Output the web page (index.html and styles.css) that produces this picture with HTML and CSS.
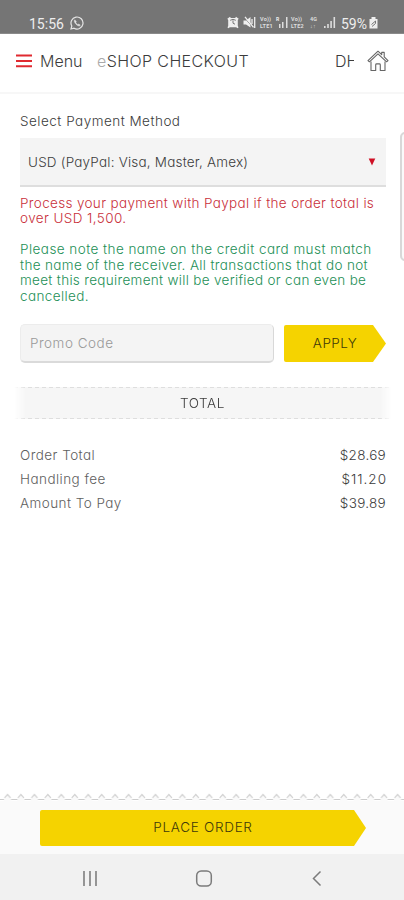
FILE: index.html
```html
<!DOCTYPE html>
<html lang="en">
<head>
<meta charset="utf-8">
<title>eSHOP Checkout</title>
<link rel="stylesheet" href="styles.css">
</head>
<body>
<div class="screen">
  <div class="status">
    <span class="clock">15:56</span>
    <svg class="chat" width="14" height="14" viewBox="0 0 14 14" fill="none" stroke="#e4e4e4" stroke-width="1.2"><path d="M1 13l.8-3A6 6 0 1 1 4 12.2z"/><path d="M4.8 3.8c-1.3 1.2.1 3.4 1.5 4.7 1.4 1.2 3.2 2 4 .7l-1.5-1.1-.9.6C6.900 8.200 6.200 7.400 5.800 6.500l.5-.8z" fill="#e4e4e4" stroke-width=".5"/></svg>
    <svg class="alarm" width="12" height="13" viewBox="0 0 12 13"><path d="M.3 2.800 3 .8l.8 1.100h4.400L9 .8l2.700 2-.9 1.300v5.700l.7 1.700-1.200.7-1-.9H2.700l-1 .9-1.200-.7.700-1.700V4.100z" fill="#eee"/><path d="M3.200 4.300Q6 2.300 8.800 4.300M6 4.300v2.900l2 1" fill="none" stroke="#777"/></svg>
    <svg class="mute" width="13" height="13" viewBox="0 0 13 13"><path d="M.5 4.500H3L7.500 1v10.500L3 8.500H.5z" fill="#eee"/><path d="M1 1l9 10.500" stroke="#757575"/><path d="M2 .8l8.500 10.500M9 3v5M11.700 1v11" stroke="#eee" stroke-width="1.300" fill="none"/></svg>
    <span class="lte lte1"><span>Vo))</span><span>LTE1</span></span>
    <span class="roam">R</span>
    <svg class="bars1" width="9" height="12" viewBox="0 0 9 12" fill="#ddd"><path d="M0 8h1.500v4H0zM3 6h1.500v6H3zM7 1h1.500v11H7z"/></svg>
    <span class="lte lte2"><span>Vo))</span><span>LTE2</span></span>
    <span class="lte four"><span>4G</span><span>↓↑</span></span>
    <svg class="bars2" width="12" height="12" viewBox="0 0 12 12" fill="#ddd"><path d="M0 10h1.600v2H0zM3.200 8h1.600v4H3.200zM6.300 5h1.600v7H6.300zM9.500 1h1.600v11H9.500z"/></svg>
    <span class="percent">59%</span>
    <svg class="battery" width="9" height="13" viewBox="0 0 9 13"><path d="M.5 3h2V1h4v2h2v9.500h-8z" fill="#eee"/><path d="M2.500 8.500 6.500 5v2.500L3 10.500" fill="none" stroke="#777"/></svg>
  </div>
  <header class="header">
    <svg class="burger" width="16" height="14" viewBox="0 0 16 14"><path d="M0 1.500h16M0 7h16M0 12.300h16" stroke="#e02a30" stroke-width="1.900"/></svg>
    <span class="menu">Menu</span>
    <h1 class="title"><span class="faded">e</span>SHOP CHECKOUT</h1>
    <span class="brand">DH</span>
    <svg class="home" width="22" height="22" viewBox="0 0 22 23" preserveAspectRatio="none" fill="none" stroke="#666" stroke-width="1.100" stroke-linejoin="round"><path d="M1 11 11 1.300l3.700 3.600V2.500h2.500v4.800L21 11l-1.400 1.300L11 4 2.400 12.300z"/><path d="M4 12v9.500h4.700v-6q0-1 1-1h2.600q1 0 1 1v6H18V12"/></svg>
  </header>
  <main class="content">
    <div class="label">Select Payment Method</div>
    <div class="select"><span>USD (PayPal: Visa, Master, Amex)</span><svg width="8" height="8" viewBox="0 0 8 8"><path d="M.7.500h6.600L4 7.500z" fill="#cf1025"/></svg></div>
    <p class="note red"><span class="r1">Process your payment with Paypal if the order total is</span><span class="r2">over USD 1,500.</span></p>
    <p class="note green"><span class="g1">Please note the name on the credit card must match</span><span class="g2">the name of the receiver. All transactions that do not</span><span class="g3">meet this requirement will be verified or can even be</span><span class="g4">cancelled.</span></p>
    <div class="promo"><div class="field">Promo Code</div><div class="arrow apply"><span>APPLY</span></div></div>
    <div class="total"><span>TOTAL</span></div>
    <div class="rows">
      <div class="row"><span>Order Total</span><span class="price">$28.69</span></div>
      <div class="row"><span>Handling fee</span><span class="price p2">$11.20</span></div>
      <div class="row"><span>Amount To Pay</span><span class="price">$39.89</span></div>
    </div>
  </main>
  <svg class="zigzag" width="404" height="8" viewBox="0 0 404 8"><defs><pattern id="tooth" width="13.450" height="8" patternUnits="userSpaceOnUse"><path d="M3.800 6 7.500 1.800 11.200 6V8H3.800z" fill="#fafafa"/><path d="M4.500 4.800 7.500 1.500 10.500 4.800" fill="none" stroke="#d2d2d2" stroke-width="1.200"/><path d="M0 6.500h4M11 6.500h2.450" stroke="#ccc"/></pattern></defs><path d="M0 0h404v8H0z" fill="url(#tooth)"/></svg>
  <footer class="footer"><div class="arrow order"><span>PLACE ORDER</span></div></footer>
  <nav class="nav">
    <svg width="16" height="17" viewBox="0 0 16 17"><path d="M2 1v15M8 1v15M14 1v15" stroke="#8c8c8c" stroke-width="1.800"/></svg>
    <svg class="circle" width="18" height="17" viewBox="0 0 18 17"><rect x="1.700" y="1" width="14.600" height="15" rx="4.500" fill="none" stroke="#7b7b7b" stroke-width="1.500"/></svg>
    <svg width="10" height="17" viewBox="0 0 10 17"><path d="M8.500 1.500 1.500 8.500l7 7" fill="none" stroke="#7b7b7b" stroke-width="1.500"/></svg>
  </nav>
  <div class="edge"></div>
</div>
</body>
</html>
```
FILE: styles.css
```css
* { box-sizing: border-box; }
body { margin: 0; background: #fff; font-family: Inter, "Liberation Sans", sans-serif; font-size: 13.5px; font-weight: 300; font-feature-settings: "cv11"; color: #3c3c3c; }
.screen { position: relative; width: 404px; height: 900px; overflow: hidden; display: flex; flex-direction: column; }
.screen span { white-space: nowrap; }
.status { height: 34px; flex: none; background: #757575; color: #eee; display: flex; align-items: flex-start; padding: 16px 0 0 29px; border-bottom: 1px solid #8a8a8a; font-family: Roboto, sans-serif; font-weight: 400; }
.status svg { flex: none; }
.clock { font-size: 14px; line-height: 16px; width: 41px; }
.alarm { margin-left: 143px; }
.mute { margin-left: 4px; }
.lte { font: 700 5.5px/7px Roboto, sans-serif; width: 15px; color: #ddd; letter-spacing: .2px; }
.lte span { display: block; }
.lte1 { margin-left: 4px; }
.roam { font: 700 5px/6px Roboto, sans-serif; width: 5px; margin-left: 1px; }
.bars1 { margin-left: -2px; }
.lte2 { margin-left: 3px; }
.four { width: 10px; margin-left: 4px; }
.bars2 { margin-left: 4px; }
.percent { font-size: 14px; line-height: 16px; width: 27px; margin-left: 5px; }
.battery { margin-left: 1px; }
.header { height: 60px; flex: none; border-bottom: 2px solid #f7f7f7; display: flex; align-items: center; padding: 0 15px 4px 16px; font-size: 16px; }
.menu { margin-left: 8px; width: 57px; }
.title { margin: 0; width: 238px; font-size: 16px; font-weight: 300; letter-spacing: .4px; }
.faded { color: #aaa; }
.brand { width: 18.500px; overflow: hidden; }
.home { margin-left: auto; }
.content { padding: 18px 18px 0 20px; height: 699px; flex: none; }
.label { line-height: 18px; height: 26px; letter-spacing: .49px; }
.select { width: 366px; height: 49px; background: #f4f4f4; border-bottom: 2px solid #dedede; display: flex; align-items: center; justify-content: space-between; padding: 1px 10px 0 8px; letter-spacing: .2px; }
.note { margin: 0; line-height: 15.400px; }
.note span { display: block; }
.red { color: #c92f3a; padding-top: 9px; }
.green { color: #238f56; padding-top: 15.500px; }
.r1 { letter-spacing: .34px; }
.r2, .g4 { letter-spacing: .4px; }
.g1 { letter-spacing: .45px; }
.g2 { letter-spacing: .35px; }
.g3 { letter-spacing: .31px; }
.promo { display: flex; justify-content: space-between; width: 366px; margin-top: 20px; }
.field { width: 254px; height: 39px; border-radius: 5px; background: #f4f4f4; border: 1px solid #ececec; border-right-color: #d8d8d8; border-bottom: 2px solid #dadada; padding-left: 9px; line-height: 36px; color: #999; letter-spacing: .5px; }
.arrow { background: #f5d300; color: #40390a; display: flex; align-items: center; justify-content: center; border-radius: 2px; }
.apply { width: 102px; height: 37px; margin-top: 1px; padding-bottom: 1px; letter-spacing: .45px; clip-path: polygon(0 0, 89px 0, 100% 50%, 89px 100%, 0 100%); }
.total { height: 32px; margin: 24px -6px 0; display: flex; align-items: center; justify-content: center; padding-right: 1px; letter-spacing: .55px; background: repeating-linear-gradient(90deg, #dedede 0 4px, transparent 4px 7px) 0 0 / 100% 1px no-repeat, repeating-linear-gradient(90deg, #dedede 0 4px, transparent 4px 7px) 0 100% / 100% 1px no-repeat, #f6f6f6; -webkit-mask-image: linear-gradient(90deg, transparent, #000 12px calc(100% - 12px), transparent); mask-image: linear-gradient(90deg, transparent, #000 12px calc(100% - 12px), transparent); }
.rows { padding-top: 24px; width: 366px; }
.row { height: 24px; line-height: 24px; display: flex; justify-content: space-between; color: #606060; letter-spacing: .45px; }
.price { color: #3c3c3c; letter-spacing: .3px; }
.p2 { letter-spacing: 1px; margin-right: -1px; }
.zigzag { flex: none; }
.footer { height: 53px; flex: none; background: #fafafa; padding: 9px 0 0 40px; }
.order { width: 326px; height: 36px; padding-bottom: 2px; letter-spacing: .7px; clip-path: polygon(0 0, 314px 0, 100% 50%, 314px 100%, 0 100%); }
.nav { height: 47px; flex: none; background: #f1f1f1; display: flex; justify-content: space-between; align-items: center; padding: 2px 82px 0 82px; }
.circle { margin-right: 3px; }
.edge { position: absolute; left: 400px; top: 132px; width: 12px; height: 129px; border: 2px solid #d8d8d8; border-radius: 5px; background: #fafafa; }
```
